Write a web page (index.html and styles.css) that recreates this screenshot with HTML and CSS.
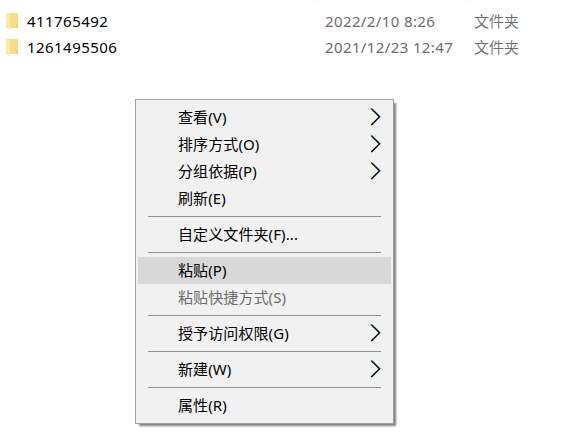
FILE: index.html
```html
<!DOCTYPE html>
<html lang="zh-CN">
<head>
    <meta charset="UTF-8">
    <meta name="viewport" content="width=device-width, initial-scale=1.0">
    <title>文件夹</title>
    <link rel="stylesheet" href="styles.css">
</head>
<body>
    <svg class="symbols" width="0" height="0">
        <symbol id="folder" viewBox="0 0 14 18">
            <path fill="#f9dc86" d="M3 1h9v15H3z"/>
            <path fill="#eecb6c" d="M11 11h1v5h-2z"/>
            <path fill="#ffe9a6" d="M0 1h3l1 2v15l-4-2z"/>
        </symbol>
        <symbol id="arrow" viewBox="0 0 12 18">
            <path fill="none" stroke="#ffee9c" d="M.6 1.2l7.6 7.6-7.6 7.6"/>
            <path fill="none" stroke="#1c7fd0" d="M2 .4l8.4 8.4-8.4 8.4"/>
            <path fill="none" stroke="#000" stroke-width="1.2" d="M1.2 .6l8.2 8.2-8.2 8.2"/>
        </symbol>
    </svg>

    <div class="header">
        <span class="tick"></span>
        <span class="tick"></span>
    </div>
    <div class="files">
        <div class="file">
            <svg class="folder"><use href="#folder"/></svg>
            <span class="name">411765492</span>
            <span class="date">2022/2/10 8:26</span>
            <span class="type">文件夹</span>
        </div>
        <div class="file">
            <svg class="folder"><use href="#folder"/></svg>
            <span class="name">1261495506</span>
            <span class="date">2021/12/23 12:47</span>
            <span class="type">文件夹</span>
        </div>
    </div>

    <div class="menu">
        <div class="item"><span>查看(V)</span><svg class="arrow"><use href="#arrow"/></svg></div>
        <div class="item"><span>排序方式(O)</span><svg class="arrow"><use href="#arrow"/></svg></div>
        <div class="item"><span>分组依据(P)</span><svg class="arrow"><use href="#arrow"/></svg></div>
        <div class="item"><span>刷新(E)</span></div>
        <div class="line"></div>
        <div class="item"><span>自定义文件夹(F)...</span></div>
        <div class="line"></div>
        <div class="item active"><span>粘贴(P)</span></div>
        <div class="item disabled"><span>粘贴快捷方式(S)</span></div>
        <div class="line"></div>
        <div class="item"><span>授予访问权限(G)</span><svg class="arrow"><use href="#arrow"/></svg></div>
        <div class="line"></div>
        <div class="item"><span>新建(W)</span><svg class="arrow"><use href="#arrow"/></svg></div>
        <div class="line"></div>
        <div class="item"><span>属性(R)</span></div>
    </div>
</body>
</html>
```

FILE: styles.css
```css
* {
    margin: 0;
    padding: 0;
    box-sizing: border-box;
}
body {
    height: 438px;
    overflow: hidden;
    background: #fff;
    color: #000;
    font-family: "Noto Sans", "Noto Sans CJK SC", sans-serif;
    font-size: 15px;
}
.symbols {
    display: block;
}
.header {
    display: flex;
    gap: 148px;
    height: 8px;
    padding-left: 317px;
}
.tick {
    width: 1px;
    height: 1px;
    background: #e5e5e5;
}
.file {
    display: grid;
    grid-template-columns: 21px 298px 149px 60px;
    align-items: center;
    height: 26px;
    padding-left: 6px;
    line-height: 26px;
    white-space: nowrap;
}
.folder {
    display: block;
    width: 14px;
    height: 18px;
}
.name {
    letter-spacing: 0.45px;
}
.date {
    letter-spacing: 0.38px;
}
.date,
.type {
    color: #6d6d6d;
}
.type {
    font-weight: 350;
}
.menu {
    position: absolute;
    left: 135px;
    top: 99px;
    width: 259px;
    height: 325px;
    padding: 4px 2px;
    border: 1px solid #a0a0a0;
    background: #f1f1f1;
    box-shadow: 3px 3px 2px -1px rgba(0, 0, 0, 0.5);
}
.item {
    display: flex;
    align-items: center;
    justify-content: space-between;
    height: 27px;
    padding: 0 9px 0 40px;
    line-height: 27px;
    letter-spacing: 0.1px;
    white-space: nowrap;
}
.item.active {
    background: #d8d8d8;
}
.item.disabled {
    color: #6d6d6d;
}
.arrow {
    width: 12px;
    height: 18px;
    margin-bottom: 2px;
}
.line {
    height: 1px;
    margin: 4px 10px;
    background: #919191;
}
```
